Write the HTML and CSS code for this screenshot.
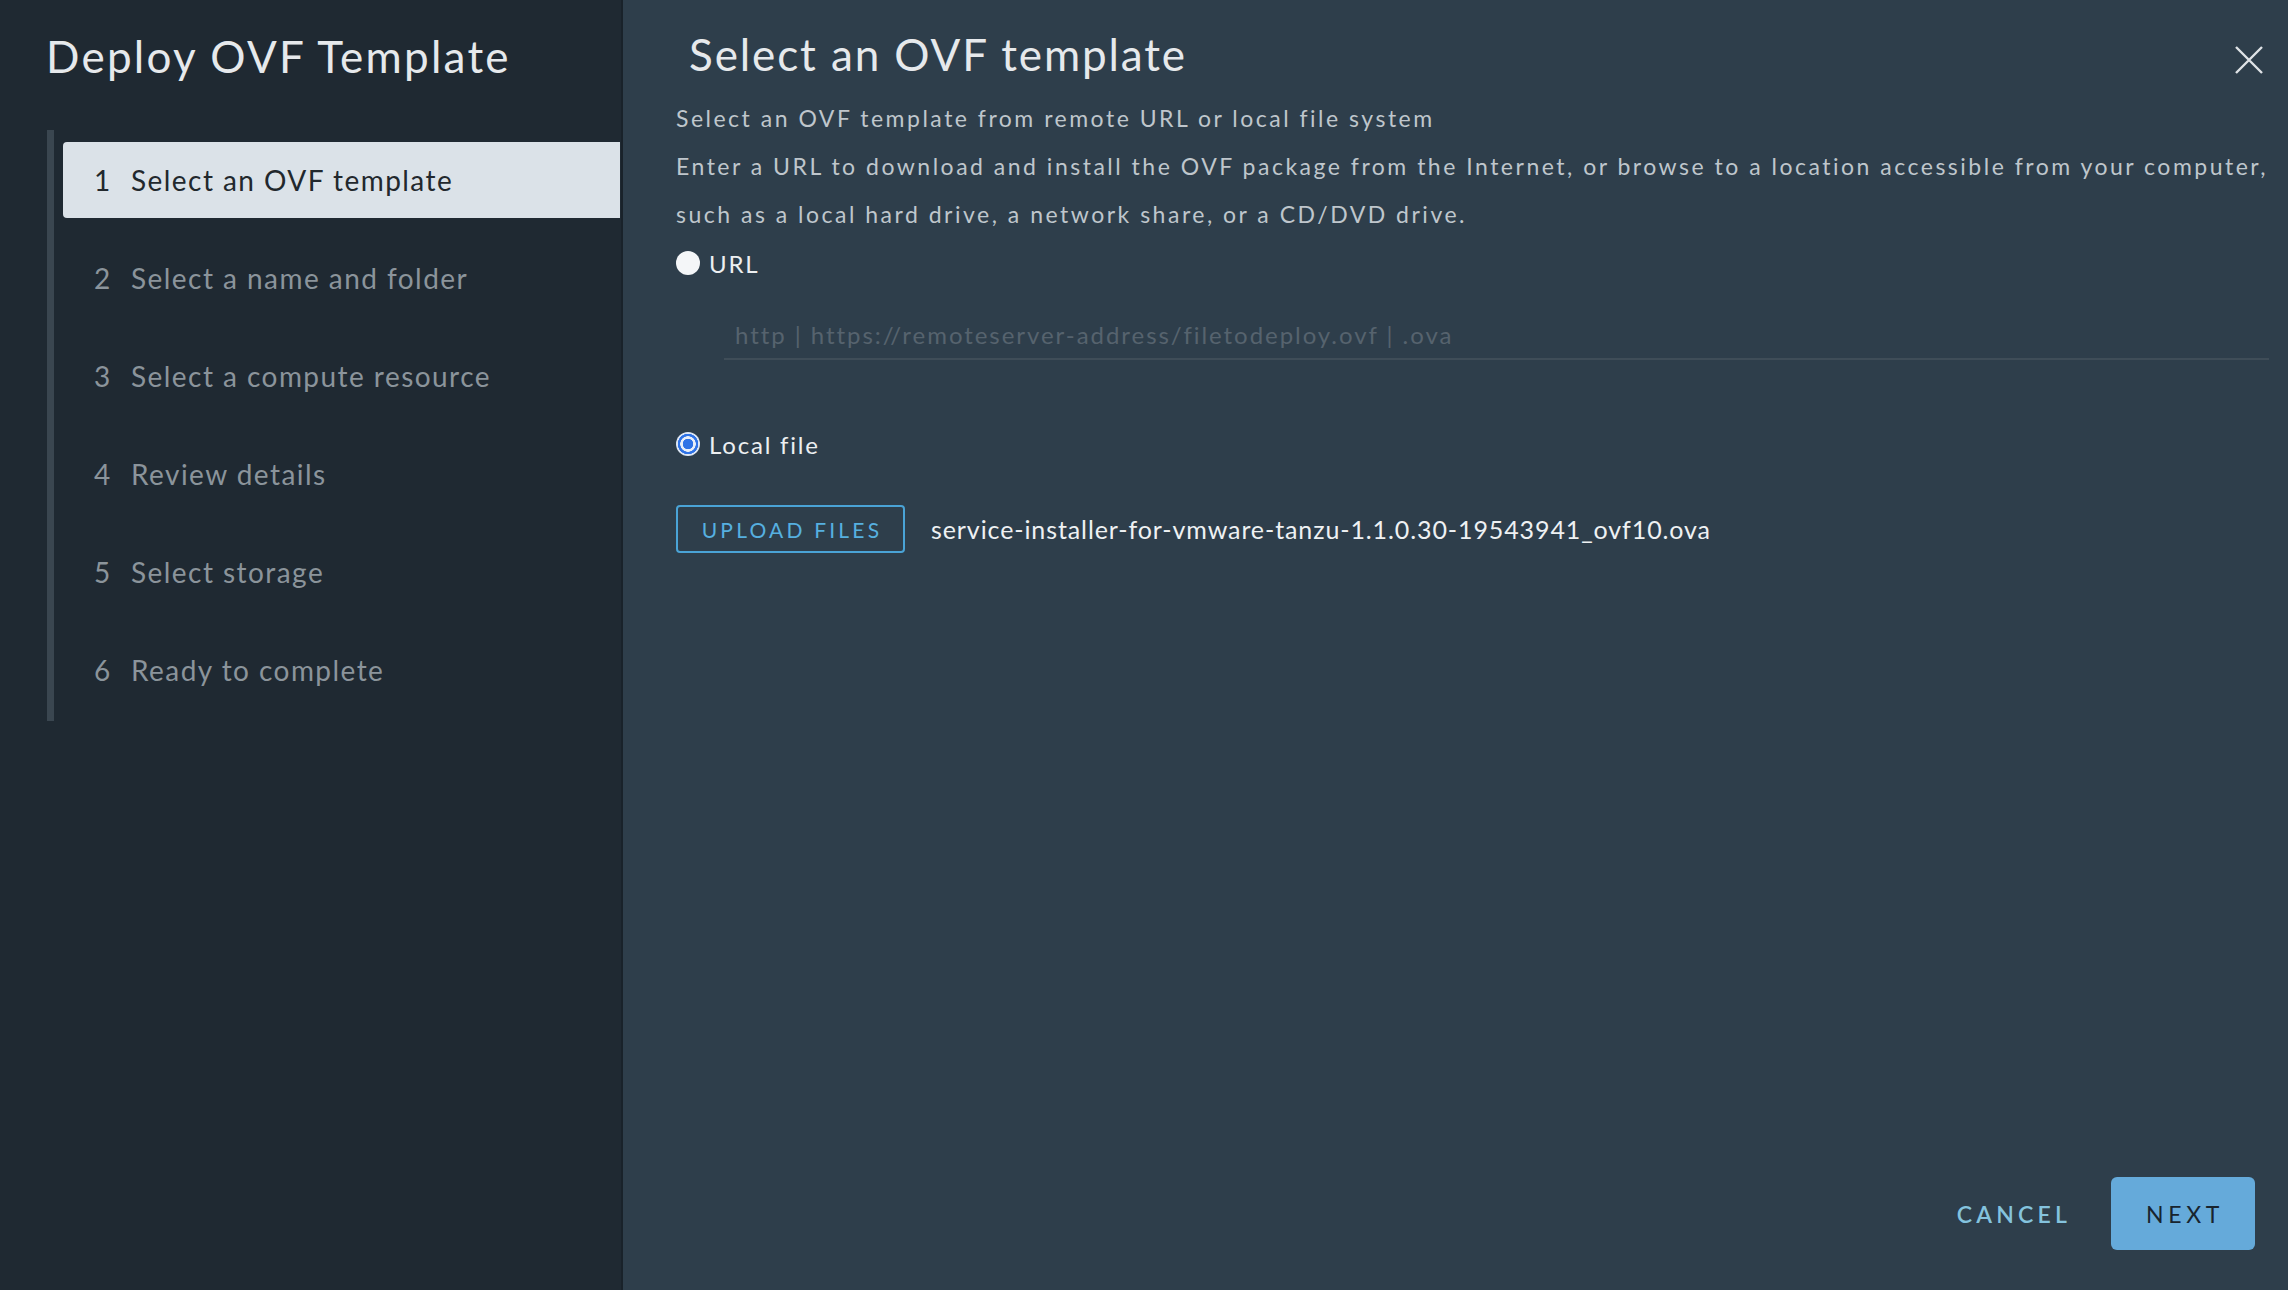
FILE: index.html
```html
<!DOCTYPE html>
<html lang="en">
<head>
<meta charset="utf-8">
<title>Deploy OVF Template</title>
<link rel="stylesheet" href="styles.css">
</head>
<body>
<div class="wizard">
  <aside class="sidebar">
    <h1 class="wizard-title">Deploy OVF Template</h1>
    <ol class="steps">
      <li class="step active"><span class="num">1</span><span class="label">Select an OVF template</span></li>
      <li class="step"><span class="num">2</span><span class="label">Select a name and folder</span></li>
      <li class="step"><span class="num">3</span><span class="label">Select a compute resource</span></li>
      <li class="step"><span class="num">4</span><span class="label">Review details</span></li>
      <li class="step"><span class="num">5</span><span class="label">Select storage</span></li>
      <li class="step"><span class="num">6</span><span class="label">Ready to complete</span></li>
    </ol>
  </aside>
  <main class="content">
    <header class="content-header">
      <h2 class="page-title">Select an OVF template</h2>
      <button class="close" aria-label="Close">
        <svg width="30" height="28" viewBox="0 0 30 28"><path d="M2 1 L28 27 M28 1 L2 27" stroke="#dfe3e7" stroke-width="2.4" fill="none"/></svg>
      </button>
    </header>
    <div class="body">
      <p class="desc">Select an OVF template from remote URL or local file system</p>
      <p class="desc">Enter a URL to download and install the OVF package from the Internet, or browse to a location accessible from your computer,</p>
      <p class="desc">such as a local hard drive, a network share, or a CD/DVD drive.</p>
      <label class="radio-row url-row"><span class="radio"></span><span class="radio-label">URL</span></label>
      <div class="url-input"><span class="placeholder">http | https://remoteserver-address/filetodeploy.ovf | .ova</span></div>
      <label class="radio-row local-row"><span class="radio checked"></span><span class="radio-label">Local file</span></label>
      <div class="upload-row">
        <button class="btn-outline">UPLOAD FILES</button>
        <span class="filename">service-installer-for-vmware-tanzu-1.1.0.30-19543941_ovf10.ova</span>
      </div>
    </div>
    <footer class="footer">
      <button class="btn-link">CANCEL</button>
      <button class="btn-primary">NEXT</button>
    </footer>
  </main>
</div>
</body>
</html>
```
FILE: styles.css
```css
* { box-sizing: border-box; }
html, body {
  margin: 0;
  padding: 0;
  width: 2288px;
  height: 1290px;
  overflow: hidden;
  font-family: "Lato", "Noto Sans", sans-serif;
}
.wizard {
  display: flex;
  width: 2288px;
  height: 1290px;
}
.sidebar {
  width: 623px;
  flex: none;
  background: #1f2932;
  border-right: 2px solid #19222a;
  padding-top: 29px;
}
.wizard-title {
  margin: 0 0 0 46px;
  font-size: 44px;
  line-height: 54px;
  font-weight: 400;
  color: #e6e9ec;
  letter-spacing: 2.25px;
}
.steps {
  list-style: none;
  margin: 47px 0 0 47px;
  padding: 12px 0 13px 0;
  border-left: 7px solid #3a4650;
  display: flex;
  flex-direction: column;
  gap: 22px;
}
.step {
  height: 76px;
  margin-left: 9px;
  margin-right: 1px;
  display: flex;
  align-items: center;
  padding-left: 31px;
  font-size: 28px;
  letter-spacing: 1.45px;
  color: #8b949b;
  border-radius: 4px 0 0 4px;
}
.step .num { width: 37px; }
.step.active {
  background: #dbe2e8;
  color: #22282d;
}
.content {
  flex: 1;
  min-width: 0;
  background: #2e3e4b;
  display: flex;
  flex-direction: column;
  padding: 0 33px 40px 53px;
}
.content-header {
  display: flex;
  justify-content: space-between;
  align-items: flex-start;
  height: 100px;
}
.page-title {
  margin: 27px 0 0 13px;
  font-size: 44px;
  line-height: 54px;
  font-weight: 400;
  color: #e6e9ec;
  letter-spacing: 1.9px;
}
.close {
  background: none;
  border: none;
  padding: 0;
  margin-top: 46px;
  margin-right: -9px;
  width: 30px;
  height: 28px;
}
.body { flex: 1; }
.desc {
  margin: 0;
  font-size: 23px;
  line-height: 48px;
  letter-spacing: 2.5px;
  white-space: nowrap;
  color: #bfc6cc;
}
.body .desc:first-child { margin-top: -6px; }
.radio-row {
  display: flex;
  align-items: center;
  height: 36px;
}
.url-row { margin-top: 7px; }
.radio {
  width: 24px;
  height: 24px;
  border-radius: 50%;
  background: #f4f6f8;
  flex: none;
}
.radio.checked {
  background: radial-gradient(circle, #2f73e6 0 5px, #e8eef8 5.5px 7.5px, #2f73e6 8px 10px, #dce6f4 10.5px);
}
.radio-label {
  margin-left: 9px;
  font-size: 24px;
  letter-spacing: 1.8px;
  color: #eceff1;
}
.url-input {
  margin: 29px -14px 0 48px;
  height: 50px;
  border-bottom: 2px solid #3f4d58;
  display: flex;
  align-items: center;
  padding-left: 11px;
}
.placeholder {
  font-size: 24px;
  letter-spacing: 1.95px;
  white-space: nowrap;
  color: #56636e;
}
.local-row { margin-top: 66px; }
.upload-row {
  display: flex;
  align-items: center;
  margin-top: 43px;
  gap: 26px;
}
.btn-outline {
  width: 229px;
  height: 48px;
  background: transparent;
  border: 2px solid #4aa3d6;
  border-radius: 4px;
  color: #56b0e0;
  font-family: inherit;
  font-size: 21px;
  letter-spacing: 3.2px;
  padding: 0 0 0 3px;
}
.filename {
  font-size: 25px;
  letter-spacing: 0.9px;
  white-space: nowrap;
  color: #eef1f3;
}
.footer {
  display: flex;
  justify-content: flex-end;
  align-items: center;
  gap: 40px;
}
.btn-link {
  background: none;
  border: none;
  color: #84c3de;
  font-family: inherit;
  font-size: 23px;
  font-weight: 600;
  letter-spacing: 4.2px;
  padding: 0;
}
.btn-primary {
  width: 144px;
  height: 73px;
  background: #65aada;
  border: none;
  border-radius: 6px;
  color: #18242e;
  font-family: inherit;
  font-size: 23px;
  letter-spacing: 4.7px;
  padding: 0 0 0 4px;
}
```
